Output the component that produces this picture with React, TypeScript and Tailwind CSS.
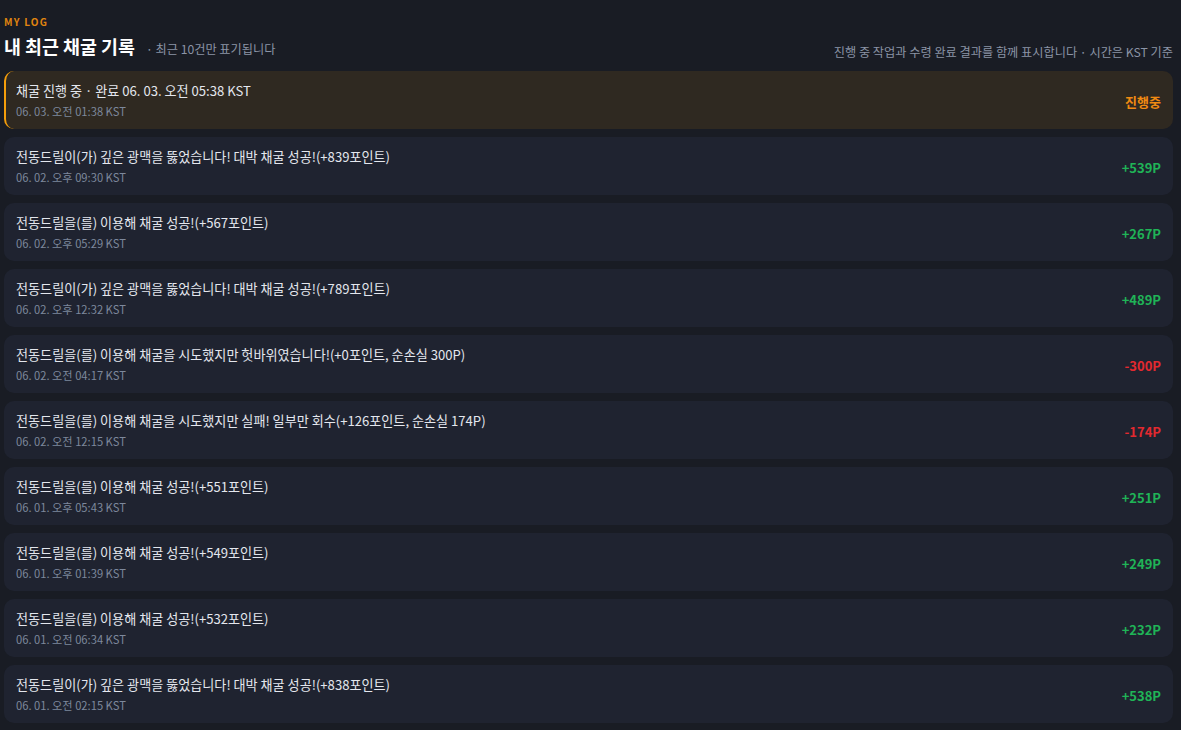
import React from 'react';

type Log = { title: string; time: string; value: string; kind: 'pending' | 'plus' | 'minus' };

const logs: Log[] = [
  { title: '채굴 진행 중 · 완료 06. 03. 오전 05:38 KST', time: '06. 03. 오전 01:38 KST', value: '진행중', kind: 'pending' },
  { title: '전동드릴이(가) 깊은 광맥을 뚫었습니다! 대박 채굴 성공!(+839포인트)', time: '06. 02. 오후 09:30 KST', value: '+539P', kind: 'plus' },
  { title: '전동드릴을(를) 이용해 채굴 성공!(+567포인트)', time: '06. 02. 오후 05:29 KST', value: '+267P', kind: 'plus' },
  { title: '전동드릴이(가) 깊은 광맥을 뚫었습니다! 대박 채굴 성공!(+789포인트)', time: '06. 02. 오후 12:32 KST', value: '+489P', kind: 'plus' },
  { title: '전동드릴을(를) 이용해 채굴을 시도했지만 헛바위였습니다!(+0포인트, 순손실 300P)', time: '06. 02. 오전 04:17 KST', value: '-300P', kind: 'minus' },
  { title: '전동드릴을(를) 이용해 채굴을 시도했지만 실패! 일부만 회수(+126포인트, 순손실 174P)', time: '06. 02. 오전 12:15 KST', value: '-174P', kind: 'minus' },
  { title: '전동드릴을(를) 이용해 채굴 성공!(+551포인트)', time: '06. 01. 오후 05:43 KST', value: '+251P', kind: 'plus' },
  { title: '전동드릴을(를) 이용해 채굴 성공!(+549포인트)', time: '06. 01. 오후 01:39 KST', value: '+249P', kind: 'plus' },
  { title: '전동드릴을(를) 이용해 채굴 성공!(+532포인트)', time: '06. 01. 오전 06:34 KST', value: '+232P', kind: 'plus' },
  { title: '전동드릴이(가) 깊은 광맥을 뚫었습니다! 대박 채굴 성공!(+838포인트)', time: '06. 01. 오전 02:15 KST', value: '+538P', kind: 'plus' },
];

export default function App() {
  return (
    <div
      className="min-h-[730px] bg-[#191c24] pl-[4px] pr-[8px] pt-[15px] pb-[8px]"
      style={{ fontFamily: '"Noto Sans CJK KR", "Noto Sans", sans-serif' }}
    >
      {/* Header */}
      <div className="text-[10px] font-bold tracking-[0.12em] text-[#e0850f] leading-[14px]">MY LOG</div>
      <div className="flex items-end justify-between mt-[4px] mb-[12px]">
        <div className="flex items-baseline gap-[11px]">
          <h1 className="text-[18.4px] font-bold text-white leading-[26px]">내 최근 채굴 기록</h1>
          <span className="text-[12.2px] text-[#8b94a6]">· 최근 10건만 표기됩니다</span>
        </div>
        <span className="text-[12.2px] text-[#8b94a6] leading-[18px] mb-[-2px]">
          진행 중 작업과 수령 완료 결과를 함께 표시합니다 · 시간은 KST 기준
        </span>
      </div>

      {/* List */}
      <div className="flex flex-col gap-[8px]">
        {logs.map((log, i) => (
          <div
            key={i}
            className={
              log.kind === 'pending'
                ? 'flex items-center justify-between h-[58px] rounded-[10px] bg-[#2f2921] border-l-2 border-[#f59e0b] pl-[10px] pr-[12px]'
                : 'flex items-center justify-between h-[58px] rounded-[10px] bg-[#1f2330] pl-[12px] pr-[12px]'
            }
          >
            <div className="flex flex-col">
              <span className="text-[13.1px] text-[#e4e7ee] leading-[18px]">{log.title}</span>
              <span className="text-[11.2px] text-[#7d889c] leading-[16px] mt-[3px]">{log.time}</span>
            </div>
            <span
              className={
                log.kind === 'pending'
                  ? 'text-[13px] font-bold text-[#f08a12] mt-[3px]'
                  : log.kind === 'plus'
                  ? 'text-[13px] font-bold text-[#1fb457] mt-[3px]'
                  : 'text-[13px] font-bold text-[#e3292f] mt-[3px]'
              }
            >
              {log.value}
            </span>
          </div>
        ))}
      </div>
    </div>
  );
}
